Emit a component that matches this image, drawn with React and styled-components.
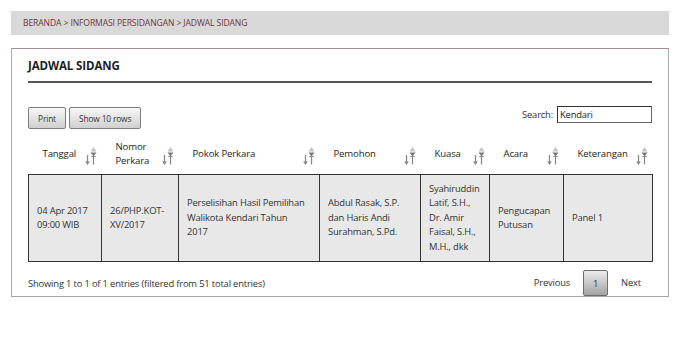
import React from "react";
import styled, { createGlobalStyle } from "styled-components";

const Global = createGlobalStyle`
  html, body { margin: 0; padding: 0; background: #fff; }
  body { font-family: "Open Sans", "Noto Sans", sans-serif; color: #333; }
`;

const Page = styled.div`
  padding: 11px 11px 0;
`;

const Breadcrumb = styled.div`
  height: 24px;
  line-height: 24px;
  background: #d9d9d9;
  padding: 0 12px;
  font-size: 8.6px;
  letter-spacing: -0.12px;
  color: #6e3838;
`;

const Panel = styled.section`
  margin-top: 13px;
  border: 1px solid #a8a8a8;
  border-top-color: #a48e94;
  padding: 0 16px;
  background: #fff;
`;

const Title = styled.h2`
  margin: 9px 0 0;
  padding-bottom: 7px;
  border-bottom: 2px solid #555;
  font-size: 11.5px;
  line-height: 16px;
  font-weight: 700;
  letter-spacing: -0.1px;
  color: #1e1e1e;
`;

const Toolbar = styled.div`
  margin-top: 23px;
  display: flex;
  justify-content: space-between;
  align-items: flex-start;
`;

const ButtonGroup = styled.div`
  display: flex;
  gap: 3px;
  padding-top: 1px;
`;

const GrayButton = styled.button`
  height: 22px;
  padding: 0 ${(p) => p.$pad || 8}px;
  border: 1px solid #7d7d7d;
  border-radius: 2px;
  background: linear-gradient(#f7f7f7, #cfcfcf);
  font-family: inherit;
  font-size: 8.4px;
  letter-spacing: -0.15px;
  color: #333;
  cursor: pointer;
`;

const SearchLabel = styled.label`
  display: flex;
  align-items: center;
  gap: 4px;
  font-size: 9.4px;
  letter-spacing: -0.17px;
  color: #333;
`;

const SearchInput = styled.input`
  width: 95px;
  height: 17px;
  box-sizing: border-box;
  border: 1px solid #666;
  border-top-color: #333;
  border-left-color: #333;
  padding: 0 2px;
  font-family: inherit;
  font-size: 9.4px;
  letter-spacing: -0.17px;
  color: #222;
  outline: none;
`;

const Table = styled.table`
  margin-top: 9px;
  width: 624px;
  table-layout: fixed;
  border-collapse: collapse;
`;

const Th = styled.th`
  padding: 2px 5px 6px 14px;
  border-bottom: 1px solid #333;
  text-align: left;
  font-weight: 400;
  font-size: 9.6px;
  letter-spacing: -0.15px;
  line-height: 14px;
  color: #1e1e1e;
  vertical-align: middle;
`;

const ThInner = styled.div`
  display: flex;
  align-items: center;
  justify-content: space-between;
  gap: 4px;
`;

const SortIconWrap = styled.span`
  flex: none;
  display: flex;
  margin-top: 4px;
`;

const Td = styled.td`
  padding: 7px 8px;
  border: 1px solid #333;
  background: #e8e8e8;
  font-size: 9.4px;
  letter-spacing: -0.17px;
  line-height: 14.4px;
  color: #333;
  vertical-align: middle;
`;

const Footer = styled.div`
  margin-top: 8px;
  height: 26px;
  display: flex;
  justify-content: space-between;
  align-items: center;
`;

const Info = styled.div`
  font-size: 9.4px;
  letter-spacing: -0.17px;
  color: #333;
`;

const Pager = styled.div`
  display: flex;
  align-items: center;
  gap: 1px;
  height: 26px;
`;

const PageLink = styled.span`
  padding: 0 ${(p) => p.$right}px 0 ${(p) => p.$left}px;
  font-size: 9.4px;
  letter-spacing: -0.17px;
  color: #333;
  line-height: 26px;
`;

const PageCurrent = styled.span`
  width: 25px;
  height: 26px;
  box-sizing: border-box;
  display: flex;
  align-items: center;
  justify-content: center;
  border: 1px solid #6e6e6e;
  border-radius: 2px;
  background: linear-gradient(#ececec, #a2a2a2);
  font-size: 9.4px;
  color: #333;
`;

function SortIcon() {
  return (
    <SortIconWrap>
      <svg width="12" height="18" viewBox="0 0 12 18">
        <line x1="2.5" y1="8" x2="2.5" y2="17" stroke="#8a8a8a" strokeWidth="1.3" />
        <polyline points="0.8,14.2 2.5,17 4.2,14.2" fill="none" stroke="#8a8a8a" strokeWidth="1.2" />
        <polygon points="8.5,0 11.5,4.5 5.5,4.5" fill="#c4c4c4" />
        <polygon points="5.5,5.5 11.5,5.5 8.5,9.5" fill="#7a7a7a" />
        <line x1="8.5" y1="9" x2="8.5" y2="17.5" stroke="#8a8a8a" strokeWidth="1.3" />
        <line x1="6.3" y1="9.5" x2="10.7" y2="9.5" stroke="#8a8a8a" strokeWidth="1.1" />
      </svg>
    </SortIconWrap>
  );
}

const columns = [
  { w: 73, label: "Tanggal" },
  { w: 77, label: <>Nomor<br />Perkara</> },
  { w: 141, label: "Pokok Perkara" },
  { w: 101, label: "Pemohon" },
  { w: 69, label: "Kuasa" },
  { w: 74, label: "Acara" },
  { w: 89, label: "Keterangan" },
];

const row = [
  <>04 Apr 2017<br />09:00 WIB</>,
  <>26/PHP.KOT-<br />XV/2017</>,
  <>Perselisihan Hasil Pemilihan<br />Walikota Kendari Tahun<br />2017</>,
  <>Abdul Rasak, S.P.<br />dan Haris Andi<br />Surahman, S.Pd.</>,
  <>Syahiruddin<br />Latif, S.H.,<br />Dr. Amir<br />Faisal, S.H.,<br />M.H., dkk</>,
  <>Pengucapan<br />Putusan</>,
  "Panel 1",
];

export default function App() {
  return (
    <>
      <Global />
      <Page>
        <Breadcrumb>BERANDA &gt; INFORMASI PERSIDANGAN &gt; JADWAL SIDANG</Breadcrumb>
        <Panel>
          <Title>JADWAL SIDANG</Title>
          <Toolbar>
            <ButtonGroup>
              <GrayButton $pad={9}>Print</GrayButton>
              <GrayButton $pad={9}>Show 10 rows</GrayButton>
            </ButtonGroup>
            <SearchLabel>
              Search:
              <SearchInput defaultValue="Kendari" />
            </SearchLabel>
          </Toolbar>
          <Table>
            <colgroup>
              {columns.map((c, i) => (
                <col key={i} style={{ width: c.w }} />
              ))}
            </colgroup>
            <thead>
              <tr>
                {columns.map((c, i) => (
                  <Th key={i}>
                    <ThInner>
                      <span>{c.label}</span>
                      <SortIcon />
                    </ThInner>
                  </Th>
                ))}
              </tr>
            </thead>
            <tbody>
              <tr>
                {row.map((cell, i) => (
                  <Td key={i}>{cell}</Td>
                ))}
              </tr>
            </tbody>
          </Table>
          <Footer>
            <Info>Showing 1 to 1 of 1 entries (filtered from 51 total entries)</Info>
            <Pager>
              <PageLink $left={0} $right={12}>Previous</PageLink>
              <PageCurrent>1</PageCurrent>
              <PageLink $left={12} $right={11}>Next</PageLink>
            </Pager>
          </Footer>
        </Panel>
      </Page>
    </>
  );
}
